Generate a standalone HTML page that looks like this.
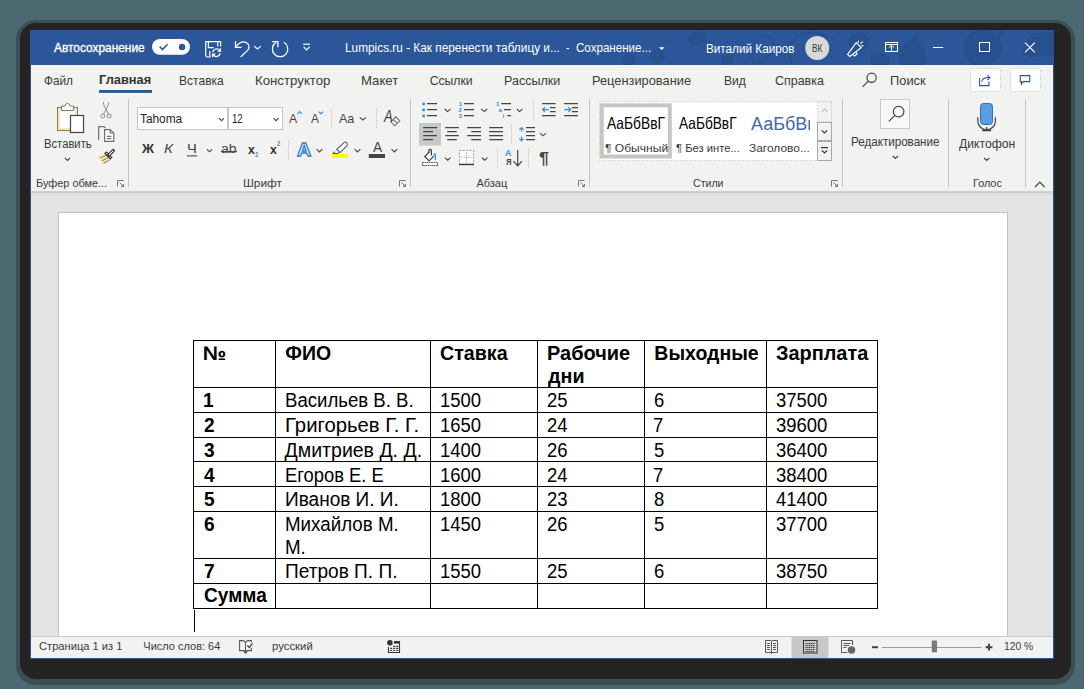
<!DOCTYPE html>
<html><head><meta charset="utf-8">
<style>
*{box-sizing:border-box;margin:0;padding:0}
html,body{width:1084px;height:689px;overflow:hidden;background:#4c6870;font-family:"Liberation Sans",sans-serif;position:relative}
.r{position:absolute}
.t{position:absolute;white-space:pre;line-height:1;transform-origin:0 0}
svg.ov{position:absolute;left:0;top:0}
</style></head><body>
<div class="r" style="left:16px;top:20px;width:1059px;height:665px;border-radius:20px;background:rgba(25,25,25,.32)"></div>
<div class="r" style="left:20px;top:23px;width:1051px;height:656px;border-radius:16px;background:#232323"></div>
<div class="r" style="left:30px;top:30px;width:1024px;height:629px;background:#2b579a"></div>
<div class="r" style="left:31px;top:65px;width:1022px;height:126px;background:#f2f2f1"></div>
<div class="r" style="left:31px;top:191px;width:1022px;height:2px;background:#cfcfcf"></div>
<div class="r" style="left:31px;top:193px;width:1022px;height:2px;background:#dddddd"></div>
<div class="r" style="left:31px;top:195px;width:1022px;height:441px;background:#e4e4e4"></div>
<div class="r" style="left:58px;top:212px;width:950px;height:424px;background:#fff;border:1px solid #c3c3c3;border-bottom:none"></div>
<div class="r" style="left:31px;top:636px;width:1022px;height:22px;background:#f2f2f1;border-top:1px solid #c8c8c8"></div>
<svg class="ov" width="1084" height="689" viewBox="0 0 1084 689" fill="none" stroke-linecap="butt">
<!-- title doodles -->
<defs><clipPath id="tbc"><rect x="30" y="30" width="1024" height="35"/></clipPath></defs>
<g clip-path="url(#tbc)">
<g fill="#27508e">
  <ellipse cx="697.5" cy="38.5" rx="9.5" ry="7" transform="rotate(-10 697.5 38.5)"/>
  <circle cx="658" cy="56.5" r="7"/>
  <circle cx="628.5" cy="60" r="6.5"/>
  <circle cx="727" cy="61" r="6"/>
  <circle cx="859" cy="42.5" r="10"/>
  <ellipse cx="880" cy="61" rx="9.5" ry="8"/>
  <path d="M899,66 C897,52 902,42 912,40 L915,34 L919,35 L917,40 C925,44 927,56 925,66 Z"/>
  <circle cx="982.5" cy="48" r="19"/>
  <path d="M990,38 L1000,31 L1006,31 L998,40 Z"/>
  <path d="M1021,53 L1031,34 L1054,31 V56 L1030,57 Z"/>
</g>
<g fill="none" stroke="#27508e" stroke-width="2">
  <path d="M754,62 C748,52 752,38 764,36 C774,35 776,46 770,54 C766,60 760,64 754,62 Z"/>
  <path d="M792,66 C786,50 792,34 808,33 C822,32 834,36 840,44"/>
</g>
</g>
<!-- title bar -->
<g stroke="#fff" stroke-width="1.2" fill="none">
  <rect x="152" y="38.9" width="38" height="15.9" rx="7.95" fill="#fff" stroke="none"/>
  <path d="M159.6,46.6 L162.4,49.6 L167.6,44.2" stroke="#2b579a" stroke-width="1.5"/>
  <circle cx="182.1" cy="47" r="3.2" fill="#2b579a" stroke="none"/>
  <!-- save -->
  <path d="M210.4,57 H206.9 L205.7,55.8 V41.7 H220.6 V46.6"/>
  <path d="M208.4,41.7 V47.6 H213.6"/>
  <path d="M217.8,41.7 V46.4"/>
  <path d="M209.8,51 V57"/>
  <path d="M212.8,52.2 A3.9,3.9 0 0 1 219.9,50.6"/>
  <path d="M220.5,48.2 V51.2 H217.6"/>
  <path d="M220.2,53.2 A3.9,3.9 0 0 1 213.1,54.8"/>
  <path d="M212.5,57.2 V54.2 H215.4"/>
  <!-- undo -->
  <path d="M235.5,41.2 V47.4 H241.7" stroke-width="1.3"/>
  <path d="M236.2,46.6 C239.2,42.6 243.2,41.2 246.4,42.6 C249.6,44.2 249.6,48 247.6,50.4 L240.6,57" stroke-width="1.25"/>
  <path d="M254.2,46.2 L257.5,49 L260.8,46.2" stroke-width="1.1"/>
  <!-- redo -->
  <path d="M283.9,42.3 A7.7,7.7 0 1 1 275.8,42.6" stroke-width="1.25"/>
  <path d="M272.2,41.7 H277.9 V47.3" stroke-width="1.3"/>
  <!-- customize -->
  <path d="M303.2,44.2 H310" />
  <path d="M303.6,46.9 L306.6,49.9 L309.6,46.9" />
  <!-- megaphone -->
  <path d="M847.6,54.4 L849.8,56.4 L861.2,47.6 L856.2,42.6 Z"/>
  <path d="M852.6,54.4 L854.6,56 L857,54 L856.2,52" stroke-width="1.1"/>
  <path d="M858.4,40.8 V42.8 M860.4,43.6 L862.8,41.6 M861.4,45.6 H863.4" stroke-width="1.1"/>
  <!-- ribbon display -->
  <rect x="885.5" y="42.5" width="12" height="9" stroke-width="1"/>
  <path d="M885,44.5 H898 M891.5,45.4 V51.4 M889.2,47.6 L891.5,45.3 L893.8,47.6" stroke-width="1"/>
  <!-- min max close -->
  <path d="M933,47.5 H943.2" stroke-width="1"/>
  <rect x="979.5" y="42.5" width="10" height="9" stroke-width="1"/>
  <path d="M1025,42.6 L1034.8,52.4 M1034.8,42.6 L1025,52.4" stroke-width="1.1"/>
</g>
<circle cx="817.2" cy="48" r="12" fill="#d9d9d9"/>
<path d="M658.9,47.3 H664.5 L661.7,50.1 Z" fill="#fff"/>
<!-- tabs -->
<rect x="99" y="90" width="53" height="2.9" fill="#2b579a"/>
<g stroke="#444" stroke-width="1.2">
  <circle cx="871.6" cy="77.8" r="4.6"/>
  <path d="M868.2,81.2 L862.6,86.8"/>
</g>
<rect x="970.5" y="68.5" width="30" height="23" rx="2.5" fill="#fff" stroke="#c8c8c8" stroke-dasharray="1.4 1.4"/>
<rect x="1010.5" y="68.5" width="30" height="23" rx="2.5" fill="#fff" stroke="#c8c8c8" stroke-dasharray="1.4 1.4"/>
<g stroke="#2b579a" stroke-width="1.1" fill="none">
  <path d="M979.6,78 V85.6 H989 V81.4"/>
  <path d="M981.6,81.6 C982.6,78.4 985.4,77.2 989.6,77.6 M987.2,75.2 L989.8,77.7 L987.4,80"/>
  <path d="M1020.2,75.6 H1029.8 V81.6 H1023.4 L1021.4,84.2 V81.6 H1020.2 Z"/>
</g>
<!-- group separators -->
<g stroke="#c8c6c4" stroke-width="1">
  <path d="M128.5,99 V187 M410.5,99 V187 M589.5,99 V187 M842.5,99 V187 M948.5,99 V187 M1025.5,99 V187"/>
  <path d="M331.5,108 V129 M376.5,108 V129 M288.5,140 V161 M533.5,100 V120 M511.5,124 V145 M497.5,148 V169 M528.5,148 V169" stroke="#cfcfcf" stroke-dasharray="2 1"/>
</g>
<!-- font boxes -->
<rect x="137.5" y="107.5" width="90" height="22" fill="#fff" stroke="#c6c6c6"/>
<rect x="228.5" y="107.5" width="54" height="22" fill="#fff" stroke="#c6c6c6"/>
<g stroke="#444" stroke-width="1.1">
  <path d="M219,118.2 L221.5,120.7 L224,118.2 M273.6,118.2 L276.1,120.7 L278.6,118.2"/>
</g>
<!-- table -->
<g stroke="#000" stroke-width="1">
  <path d="M193,340.5 H878 M193,387.5 H878 M193,412.5 H878 M193,437.5 H878 M193,461.5 H878 M193,486.5 H878 M193,511.5 H878 M193,558.5 H878 M193,583.5 H878 M193,608.5 H878"/>
  <path d="M193.5,340 V609 M275.5,340 V609 M430.5,340 V609 M537.5,340 V609 M644.5,340 V609 M766.5,340 V609 M877.5,340 V609"/>
  <path d="M194.5,610 V632" stroke-width="1"/>
</g>
<!-- clipboard group -->
<g>
  <rect x="57.5" y="107.5" width="20" height="23" fill="#fde8a6" stroke="#7a7a7a" stroke-width="1"/>
  <rect x="60" y="110" width="15" height="18" fill="#fff" stroke="none"/>
  <path d="M61.5,110.5 V106 H65 A2.5,2.5 0 0 1 70,106 H73.5 V110.5 Z" fill="#fff" stroke="#7a7a7a"/>
  <rect x="70.5" y="115.5" width="13" height="17" fill="#fff" stroke="#444" stroke-width="1.2"/>
</g>
<g stroke="#8a8a8a" stroke-width="1" fill="none">
  <path d="M103.4,102.2 C103.6,105 104.6,107.4 106,109.2 L108.4,114.2 M108.6,102.2 C108.4,105 107.4,107.4 106,109.2 L103.6,114.2"/>
  <circle cx="102.8" cy="116" r="2"/><circle cx="109.2" cy="116" r="2"/>
</g>
<g stroke="#707070" stroke-width="1.2" fill="none">
  <path d="M98.6,139.8 V126.6 H104 L105.6,128.2"/>
  <path d="M104.6,141.4 V129.6 H110.2 L113.8,133.2 V141.4 Z" fill="#fff"/>
  <path d="M110.2,129.8 V133 H113.6 M107,136.4 H111.4 M107,138.6 H111.4"/>
</g>
<g>
  <path d="M105.8,153.2 L98.4,156.6 L104.4,164.8 L110.6,158.4 Z" fill="#fde5a0"/>
  <path d="M99.8,158.2 L105.6,155.6 M101.6,160.8 L108,158 M103.4,163.2 L109.6,160.2" stroke="#707080" stroke-width="0.9" fill="none"/>
  <path d="M105.2,152.4 L111.4,158.6" stroke="#333" stroke-width="3.2"/>
  <path d="M105.8,153 L110.8,158" stroke="#fff" stroke-width="1"/>
  <path d="M108.6,155.2 L113.2,150.6" stroke="#333" stroke-width="3.4" stroke-linecap="round"/>
  <path d="M109.2,154.6 L113,150.8" stroke="#fff" stroke-width="1.1" stroke-linecap="round"/>
</g>
<!-- chevrons -->
<g stroke="#444" stroke-width="1.1" fill="none">
  <path d="M64.8,157.8 L67.5,160.4 L70.2,157.8"/>
  <path d="M207,149.4 L209.5,151.8 L212,149.4"/>
  <path d="M316.6,149.2 L319.5,151.9 L322.4,149.2 M354.6,149.2 L357.5,151.9 L360.4,149.2 M391.5,149.2 L394.4,151.9 L397.3,149.2"/>
  <path d="M359.8,117.4 L362.8,120 L365.8,117.4"/>
  <path d="M444.6,109 L447.5,111.6 L450.4,109 M481.4,109 L484.3,111.6 L487.2,109 M516.8,109 L519.6,111.6 L522.4,109"/>
  <path d="M540,133.2 L543,135.8 L546,133.2"/>
  <path d="M444.8,157.6 L447.7,160.2 L450.6,157.6 M481.7,157.6 L484.6,160.2 L487.5,157.6"/>
  <path d="M892.8,156 L895.4,158.4 L898,156 M984,158 L986.6,160.4 L989.2,158"/>
  <path d="M1035,187 L1039.8,182.2 L1044.6,187" stroke-width="1.2"/>
</g>
<!-- font row1 carets -->
<g stroke="#3b8fd9" stroke-width="1.2" fill="none">
  <path d="M297.4,113.8 L299.6,111.6 L301.8,113.8"/>
  <path d="M318.6,111.6 L320.9,113.8 L323.2,111.6"/>
</g>
<!-- clear formatting eraser -->
<path d="M390.8,121.8 L395.8,116.8 L399.8,120.8 L394.8,125.8 Z M393.3,119.3 L397.3,123.3" stroke="#707070" stroke-width="1.1" fill="none"/>
<!-- underline / strike -->
<path d="M187,155.9 H197.2" stroke="#444" stroke-width="1.1"/>
<path d="M220.8,151.6 H237" stroke="#444" stroke-width="1.1"/>
<!-- highlighter -->
<rect x="331.8" y="154" width="16.3" height="4" fill="#ffff00"/>
<path d="M336.8,149.4 L343.8,142.8 A1.6,1.6 0 0 1 346.8,145.8 L340.2,152.6 Z M335,151.6 L333.2,153.4 L337.8,153.4 L339,152.4" fill="#fff" stroke="#555" stroke-width="1.05"/>
<rect x="368.8" y="154" width="16.2" height="4" fill="#444"/>
<!-- bullets -->
<rect x="419" y="123" width="22" height="22.6" fill="#c8c8c8"/>
<g fill="#3b8fd9">
  <rect x="422.3" y="102.6" width="2.6" height="2.6"/><rect x="422.3" y="108.6" width="2.6" height="2.6"/><rect x="422.3" y="114.6" width="2.6" height="2.6"/>
</g>
<g stroke="#444" stroke-width="1.2">
  <path d="M427,103.6 H437 M427,109.6 H437 M427,115.6 H437 M464,103.6 H474 M464,109.6 H474 M464,115.6 H474 M501.3,103.6 H511 M504,109.6 H511 M507.3,115.6 H511" stroke-width="1.1"/>
  <!-- indent -->
  <path d="M542,103.6 H555.6 M550,107.6 H555.6 M550,111.6 H555.6 M542,115.6 H555.6"/>
  <path d="M564.2,103.6 H578 M572,107.6 H578 M572,111.6 H578 M564.2,115.6 H578"/>
  <!-- align -->
  <path d="M423.2,127.6 H437 M423.2,131.6 H433 M423.2,135.6 H437 M423.2,139.6 H433"/>
  <path d="M445.2,127.6 H458.8 M447.2,131.6 H456.8 M445.2,135.6 H458.8 M447.2,139.6 H456.8"/>
  <path d="M467.2,127.6 H481 M471.2,131.6 H481 M467.2,135.6 H481 M471.2,139.6 H481"/>
  <path d="M489.2,127.6 H503 M489.2,131.6 H503 M489.2,135.6 H503 M489.2,139.6 H503"/>
  <path d="M526,127.6 H535 M526,131.6 H535 M526,135.6 H535 M526,139.6 H535"/>
</g>
<g stroke="#3b8fd9" stroke-width="1.2" fill="none">
  <path d="M549,109.6 H542.6 M545,107.2 L542.6,109.6 L545,112"/>
  <path d="M564.2,109.6 H570.8 M568.4,107.2 L570.8,109.6 L568.4,112"/>
  <path d="M521.5,127.6 V131.8 M521.5,136.4 V140.8 M519.3,129.8 L521.5,127.6 L523.7,129.8 M519.3,138.6 L521.5,140.8 L523.7,138.6"/>
</g>
<g fill="#3b8fd9" font-family="Liberation Sans" font-weight="bold" font-size="6.2">
  <text x="458.8" y="106.4">1</text><text x="458.6" y="112.4">2</text><text x="458.6" y="118.4">3</text>
  <text x="496" y="106.4">1</text><text x="498.6" y="112.4">a</text><text x="502.6" y="118.4">i</text>
</g>
<!-- shading -->
<g fill="none" stroke="#333" stroke-width="1.15">
  <path d="M429.4,151.8 L424.8,156.5 L429.1,160.8 L434.2,155.6" fill="#fff"/>
  <path d="M428.9,152.6 V150.6 A1.25,1.25 0 0 1 431.4,150.6 V155.6"/>
  <rect x="422.5" y="162.5" width="15" height="3" fill="#fff" stroke="#555" stroke-dasharray="1.6 0.6"/>
</g>
<path d="M434,154.6 Q435.4,152.8 435.4,155.4 V160" stroke="#3b8fd9" stroke-width="1.3" fill="none"/>
<!-- borders -->
<rect x="459.5" y="150.5" width="14" height="13.5" fill="#fff" stroke="#9a9a9a" stroke-dasharray="2 1.4"/>
<path d="M466.5,152 V163 M461,157.3 H472" stroke="#b0b0b0" stroke-width="1" stroke-dasharray="1.6 1.4" fill="none"/>
<path d="M459,164.5 H474" stroke="#333" stroke-width="1.3"/>
<!-- sort arrow -->
<path d="M517.7,150 V165.6 M513.4,161.2 L517.7,165.8 L522,161.2" stroke="#444" stroke-width="1.2" fill="none"/>
<!-- styles gallery -->
<rect x="599.5" y="101.5" width="232" height="59" fill="#fff" stroke="#d0d0d0" stroke-dasharray="1.5 1.5"/>
<rect x="601.8" y="105.3" width="68" height="51.2" fill="none" stroke="#c6c6c6" stroke-width="4"/>
<rect x="817.5" y="101.5" width="14" height="20" fill="#f3f2f1" stroke="#d0d0d0" stroke-dasharray="1.5 1.5"/>
<rect x="817.5" y="122.5" width="14" height="18" fill="#f3f2f1" stroke="#a8a8a8"/>
<rect x="817.5" y="141.5" width="14" height="19" fill="#f3f2f1" stroke="#a8a8a8"/>
<g fill="none" stroke-width="1.1">
  <path d="M821.8,111.6 L824.5,109 L827.2,111.6" stroke="#b8b8b8"/>
  <path d="M821.8,130.4 L824.5,133 L827.2,130.4" stroke="#333"/>
  <path d="M821,147.6 H828 M821.8,150.4 L824.5,153 L827.2,150.4" stroke="#333"/>
</g>
<!-- editing -->
<rect x="880.5" y="99.5" width="29" height="29" fill="#f8f8f8" stroke="#c8c8c8"/>
<g stroke="#444" stroke-width="1.2" fill="none">
  <circle cx="898.6" cy="111.6" r="5.3"/>
  <path d="M894.8,115.4 L888.8,121.4"/>
</g>
<!-- mic -->
<rect x="980.5" y="103.5" width="12" height="21" rx="3" fill="#5a9de0" stroke="#2f6db5" stroke-width="1"/>
<path d="M977.8,117.2 V121 A8.8,8.8 0 0 0 995.4,121 V117.2 M986.6,129.8 V130.6 M982,130.6 H991.2" stroke="#444" stroke-width="1.2" fill="none"/>
<path d="M986.6,127 V130.6" stroke="#444" stroke-width="1.2"/>
<!-- launchers -->
<g stroke="#777" stroke-width="1" fill="none">
  <path d="M117.5,186.5 V180.5 H123.5 M119.5,182.5 L123.5,186.5 M121,186.5 H123.5 V184"/>
  <path d="M399.5,186.5 V180.5 H405.5 M401.5,182.5 L405.5,186.5 M403,186.5 H405.5 V184"/>
  <path d="M578.5,186.5 V180.5 H584.5 M580.5,182.5 L584.5,186.5 M582,186.5 H584.5 V184"/>
  <path d="M831.5,186.5 V180.5 H837.5 M833.5,182.5 L837.5,186.5 M835,186.5 H837.5 V184"/>
</g>
<!-- status bar -->
<rect x="791.5" y="637" width="37" height="21" fill="#c8c8c8"/>
<g stroke="#555" stroke-width="1" fill="none">
  <path d="M245.5,642.4 L243.4,640.6 H239.6 V650.6 H244.2 L245.5,651.8 L246.8,650.6 H251.4 V647.8 M251.4,642.6 V640.6 H247.6 L245.5,642.4 M245.5,642.4 V652.8 M243.8,651.4 L245.5,653.2 L247.2,651.4" stroke="#555" stroke-width="1.05"/>
  <path d="M247.4,645.4 L249.2,647.4 L252.6,643.4" stroke="#444" stroke-width="1.3"/>
  <path d="M388.5,647 V652.5 H399.5 V641.2" stroke="#333" stroke-width="1.1"/>
  <rect x="394" y="641" width="6" height="2.6" fill="#333" stroke="none"/>
  <circle cx="389.9" cy="642.8" r="2.8" fill="#333" stroke="none"/>
  <path d="M393.2,646.4 H395.2 M396.2,646.4 H398.2 M390.2,648.4 H392.2 M393.2,648.4 H395.2 M396.2,648.4 H398.2 M390.2,650.5 H392.2 M393.2,650.5 H395.2 M396.2,650.5 H398.2" stroke="#333" stroke-width="1.1"/>
  <path d="M765.5,640.5 H770.8 L771.5,641.5 L772.2,640.5 H777.5 V652.5 H765.5 Z M771.5,641.5 V654 M767,643.5 H770 M767,645.5 H770 M767,647.5 H770 M767,649.5 H770 M773,643.5 H776 M773,645.5 H776 M773,647.5 H776 M773,649.5 H776"/>
  <rect x="803.5" y="640.5" width="13.5" height="12.5" stroke="#333"/>
  <path d="M805.5,643.5 H815 M805.5,645.5 H815 M805.5,647.5 H815 M805.5,649.5 H815 M805.5,651.5 H815" stroke="#333" stroke-dasharray="1.2 0.6"/>
  <path d="M847.5,652.5 H841.5 V640.5 H852.5 V645 M843.5,643.5 H850.5 M843.5,645.5 H849 M843.5,647.5 H846.5"/>
  <circle cx="851.5" cy="650" r="3.8" fill="#666" stroke="none"/>
  <path d="M872,647.2 H878" stroke="#444" stroke-width="2"/>
  <path d="M882,647.5 H981.5" stroke="#999"/>
  <path d="M985.6,647.2 H992.4 M989,643.8 V650.6" stroke="#444" stroke-width="2"/>
</g>
<rect x="931.8" y="640.5" width="5.2" height="11.8" fill="#7a7a7a"/>

</svg>

<span class="t" style="left:54.20px;top:41.89px;font-size:12.3px;font-weight:normal;color:#fff;transform:scaleX(0.9670);-webkit-text-stroke:0.35px #fff;">Автосохранение</span>
<span class="t" style="left:344.50px;top:42.34px;font-size:12px;font-weight:normal;color:#fff;transform:scaleX(0.9857);">Lumpics.ru - Как перенести таблицу и...</span>
<span class="t" style="left:565.60px;top:42.34px;font-size:12px;font-weight:normal;color:#fff;transform:scaleX(0.8500);">-</span>
<span class="t" style="left:576.40px;top:42.34px;font-size:12px;font-weight:normal;color:#fff;transform:scaleX(0.9648);">Сохранение...</span>
<span class="t" style="left:705.80px;top:43.14px;font-size:12px;font-weight:normal;color:#fff;transform:scaleX(0.9767);">Виталий Каиров</span>
<span class="t" style="left:811.80px;top:43.09px;font-size:11px;font-weight:normal;color:#3a3a3a;transform:scaleX(0.7533);">ВК</span>
<span class="t" style="left:43.50px;top:75.07px;font-size:12.2px;font-weight:normal;color:#3b3a39;transform:scaleX(0.9681);">Файл</span>
<span class="t" style="left:99.40px;top:74.48px;font-size:12.9px;font-weight:bold;color:#333;transform:scaleX(0.9942);">Главная</span>
<span class="t" style="left:179.31px;top:75.07px;font-size:12.2px;font-weight:normal;color:#3b3a39;transform:scaleX(0.9883);">Вставка</span>
<span class="t" style="left:255.31px;top:75.07px;font-size:12.2px;font-weight:normal;color:#3b3a39;transform:scaleX(1.0857);">Конструктор</span>
<span class="t" style="left:361.32px;top:75.07px;font-size:12.2px;font-weight:normal;color:#3b3a39;transform:scaleX(1.0793);">Макет</span>
<span class="t" style="left:429.70px;top:75.07px;font-size:12.2px;font-weight:normal;color:#3b3a39;">Ссылки</span>
<span class="t" style="left:503.97px;top:75.07px;font-size:12.2px;font-weight:normal;color:#3b3a39;transform:scaleX(1.0266);">Рассылки</span>
<span class="t" style="left:591.75px;top:75.07px;font-size:12.2px;font-weight:normal;color:#3b3a39;transform:scaleX(1.0522);">Рецензирование</span>
<span class="t" style="left:723.51px;top:75.07px;font-size:12.2px;font-weight:normal;color:#3b3a39;transform:scaleX(0.9935);">Вид</span>
<span class="t" style="left:775.40px;top:75.07px;font-size:12.2px;font-weight:normal;color:#3b3a39;transform:scaleX(1.0222);">Справка</span>
<span class="t" style="left:890.00px;top:75.07px;font-size:12.2px;font-weight:normal;color:#3b3a39;transform:scaleX(1.0540);">Поиск</span>
<span class="t" style="left:44.40px;top:137.84px;font-size:12px;font-weight:normal;color:#3b3a39;transform:scaleX(0.9365);">Вставить</span>
<span class="t" style="left:35.50px;top:178.09px;font-size:11px;font-weight:normal;color:#3b3a39;transform:scaleX(0.9921);">Буфер обме...</span>
<span class="t" style="left:242.50px;top:178.09px;font-size:11px;font-weight:normal;color:#3b3a39;transform:scaleX(1.0732);">Шрифт</span>
<span class="t" style="left:476.40px;top:178.09px;font-size:11px;font-weight:normal;color:#3b3a39;">Абзац</span>
<span class="t" style="left:692.70px;top:178.09px;font-size:11px;font-weight:normal;color:#3b3a39;transform:scaleX(0.9637);">Стили</span>
<span class="t" style="left:972.60px;top:178.09px;font-size:11px;font-weight:normal;color:#3b3a39;transform:scaleX(0.9847);">Голос</span>
<span class="t" style="left:851.20px;top:136.14px;font-size:12px;font-weight:normal;color:#3b3a39;transform:scaleX(0.9680);">Редактирование</span>
<span class="t" style="left:959.00px;top:137.84px;font-size:12px;font-weight:normal;color:#3b3a39;transform:scaleX(1.0147);">Диктофон</span>
<span class="t" style="left:140.30px;top:112.54px;font-size:12px;font-weight:normal;color:#262626;transform:scaleX(0.9880);">Tahoma</span>
<span class="t" style="left:232.00px;top:112.54px;font-size:12px;font-weight:normal;color:#262626;transform:scaleX(0.8045);">12</span>
<span class="t" style="left:606.80px;top:114.93px;font-size:16.5px;font-weight:normal;color:#000;transform:scaleX(0.8355);">АаБбВвГ</span>
<span class="t" style="left:604.90px;top:143.17px;font-size:11.5px;font-weight:normal;color:#3b3a39;transform:scaleX(1.0489);">¶ Обычный</span>
<span class="t" style="left:678.70px;top:114.93px;font-size:16.5px;font-weight:normal;color:#000;transform:scaleX(0.8298);">АаБбВвГ</span>
<span class="t" style="left:676.40px;top:143.17px;font-size:11.5px;font-weight:normal;color:#3b3a39;transform:scaleX(0.9750);">¶ Без инте...</span>
<span class="t" style="left:748.80px;top:143.17px;font-size:11.5px;font-weight:normal;color:#3b3a39;transform:scaleX(1.0389);">Заголово...</span>
<span class="t" style="left:289.20px;top:111.80px;font-size:13px;font-weight:normal;color:#444;transform:scaleX(0.9444);">A</span>
<span class="t" style="left:311.30px;top:111.80px;font-size:13px;font-weight:normal;color:#444;transform:scaleX(0.9111);">A</span>
<span class="t" style="left:339.20px;top:111.80px;font-size:13px;font-weight:normal;color:#444;transform:scaleX(0.9598);">Aa</span>
<span class="t" style="left:384.00px;top:108.41px;font-size:17px;font-weight:normal;color:#444;transform:scaleX(0.7750);font-style:italic;">A</span>
<span class="t" style="left:142.06px;top:143.02px;font-size:12.5px;font-weight:bold;color:#333;transform:scaleX(1.0615);">Ж</span>
<span class="t" style="left:163.89px;top:143.02px;font-size:12.5px;font-weight:normal;color:#444;transform:scaleX(1.2143);font-style:italic;">К</span>
<span class="t" style="left:187.40px;top:143.02px;font-size:12.5px;font-weight:normal;color:#444;transform:scaleX(1.1750);">Ч</span>
<span class="t" style="left:221.20px;top:143.02px;font-size:12.5px;font-weight:normal;color:#444;transform:scaleX(1.1253);">ab</span>
<span class="t" style="left:247.50px;top:142.60px;font-size:13px;font-weight:bold;color:#333;transform:scaleX(0.9375);">x</span>
<span class="t" style="left:255.20px;top:151.27px;font-size:7px;font-weight:bold;color:#3b8fd9;transform:scaleX(0.8000);">2</span>
<span class="t" style="left:269.50px;top:142.60px;font-size:13px;font-weight:bold;color:#333;transform:scaleX(0.9375);">x</span>
<span class="t" style="left:277.00px;top:140.27px;font-size:7px;font-weight:bold;color:#3b8fd9;transform:scaleX(0.8000);">2</span>
<span class="t" style="left:296.80px;top:140.32px;font-size:19px;font-weight:bold;color:#fff;transform:scaleX(1.0286);-webkit-text-stroke:1.3px #2f80d8;">A</span>
<span class="t" style="left:372.50px;top:140.33px;font-size:14.5px;font-weight:normal;color:#444;transform:scaleX(0.9400);">A</span>
<span class="t" style="left:505.30px;top:148.73px;font-size:9.3px;font-weight:bold;color:#3b8fd9;transform:scaleX(0.9571);">А</span>
<span class="t" style="left:505.60px;top:157.93px;font-size:9.3px;font-weight:bold;color:#444;transform:scaleX(0.8286);">Я</span>
<span class="t" style="left:539.20px;top:150.33px;font-size:16.5px;font-weight:bold;color:#444;transform:scaleX(1.0889);">¶</span>
<span class="t" style="left:751.00px;top:114.66px;font-size:18px;font-weight:normal;color:#3e67ad;width:58.50px;overflow:hidden;">АаБбВв</span>
<span class="t" style="left:38.50px;top:641.39px;font-size:11px;font-weight:normal;color:#3b3a39;transform:scaleX(1.0118);">Страница 1 из 1</span>
<span class="t" style="left:143.30px;top:641.39px;font-size:11px;font-weight:normal;color:#3b3a39;">Число слов: 64</span>
<span class="t" style="left:271.70px;top:641.39px;font-size:11px;font-weight:normal;color:#3b3a39;transform:scaleX(1.0324);">русский</span>
<span class="t" style="left:1004.20px;top:641.39px;font-size:11px;font-weight:normal;color:#3b3a39;transform:scaleX(0.9392);">120 %</span>
<span class="t" style="left:202.50px;top:344.39px;font-size:19.5px;font-weight:bold;color:#000;transform:scaleX(1.0950);">№</span>
<span class="t" style="left:285.30px;top:344.39px;font-size:19.5px;font-weight:bold;color:#000;">ФИО</span>
<span class="t" style="left:440.20px;top:344.39px;font-size:19.5px;font-weight:bold;color:#000;transform:scaleX(1.0086);">Ставка</span>
<span class="t" style="left:546.78px;top:344.39px;font-size:19.5px;font-weight:bold;color:#000;transform:scaleX(1.0240);">Рабочие</span>
<span class="t" style="left:547.80px;top:366.59px;font-size:19.5px;font-weight:bold;color:#000;transform:scaleX(1.0098);">дни</span>
<span class="t" style="left:654.30px;top:344.39px;font-size:19.5px;font-weight:bold;color:#000;">Выходные</span>
<span class="t" style="left:776.00px;top:344.39px;font-size:19.5px;font-weight:bold;color:#000;transform:scaleX(1.0206);">Зарплата</span>
<span class="t" style="left:203.02px;top:391.39px;font-size:19.5px;font-weight:bold;color:#000;transform:scaleX(0.9800);">1</span>
<span class="t" style="left:284.95px;top:391.39px;font-size:19.5px;font-weight:normal;color:#000;transform:scaleX(0.9532);">Васильев В. В.</span>
<span class="t" style="left:439.55px;top:391.39px;font-size:19.5px;font-weight:normal;color:#000;transform:scaleX(0.9470);">1500</span>
<span class="t" style="left:547.00px;top:391.39px;font-size:19.5px;font-weight:normal;color:#000;transform:scaleX(0.9470);">25</span>
<span class="t" style="left:654.30px;top:391.39px;font-size:19.5px;font-weight:normal;color:#000;transform:scaleX(0.9470);">6</span>
<span class="t" style="left:776.00px;top:391.39px;font-size:19.5px;font-weight:normal;color:#000;transform:scaleX(0.9470);">37500</span>
<span class="t" style="left:204.00px;top:416.39px;font-size:19.5px;font-weight:bold;color:#000;transform:scaleX(0.9800);">2</span>
<span class="t" style="left:284.86px;top:416.39px;font-size:19.5px;font-weight:normal;color:#000;transform:scaleX(1.0407);">Григорьев Г. Г.</span>
<span class="t" style="left:439.55px;top:416.39px;font-size:19.5px;font-weight:normal;color:#000;transform:scaleX(0.9470);">1650</span>
<span class="t" style="left:547.00px;top:416.39px;font-size:19.5px;font-weight:normal;color:#000;transform:scaleX(0.9470);">24</span>
<span class="t" style="left:653.35px;top:416.39px;font-size:19.5px;font-weight:normal;color:#000;transform:scaleX(0.9470);">7</span>
<span class="t" style="left:776.00px;top:416.39px;font-size:19.5px;font-weight:normal;color:#000;transform:scaleX(0.9470);">39600</span>
<span class="t" style="left:204.00px;top:441.19px;font-size:19.5px;font-weight:bold;color:#000;transform:scaleX(0.9800);">3</span>
<span class="t" style="left:284.60px;top:441.19px;font-size:19.5px;font-weight:normal;color:#000;">Дмитриев Д. Д.</span>
<span class="t" style="left:439.55px;top:441.19px;font-size:19.5px;font-weight:normal;color:#000;transform:scaleX(0.9470);">1400</span>
<span class="t" style="left:547.00px;top:441.19px;font-size:19.5px;font-weight:normal;color:#000;transform:scaleX(0.9470);">26</span>
<span class="t" style="left:654.30px;top:441.19px;font-size:19.5px;font-weight:normal;color:#000;transform:scaleX(0.9470);">5</span>
<span class="t" style="left:776.00px;top:441.19px;font-size:19.5px;font-weight:normal;color:#000;transform:scaleX(0.9470);">36400</span>
<span class="t" style="left:204.00px;top:465.69px;font-size:19.5px;font-weight:bold;color:#000;transform:scaleX(0.9800);">4</span>
<span class="t" style="left:284.96px;top:465.69px;font-size:19.5px;font-weight:normal;color:#000;transform:scaleX(0.9418);">Егоров Е. Е</span>
<span class="t" style="left:439.55px;top:465.69px;font-size:19.5px;font-weight:normal;color:#000;transform:scaleX(0.9470);">1600</span>
<span class="t" style="left:547.00px;top:465.69px;font-size:19.5px;font-weight:normal;color:#000;transform:scaleX(0.9470);">24</span>
<span class="t" style="left:653.35px;top:465.69px;font-size:19.5px;font-weight:normal;color:#000;transform:scaleX(0.9470);">7</span>
<span class="t" style="left:776.00px;top:465.69px;font-size:19.5px;font-weight:normal;color:#000;transform:scaleX(0.9470);">38400</span>
<span class="t" style="left:204.00px;top:489.89px;font-size:19.5px;font-weight:bold;color:#000;transform:scaleX(0.9800);">5</span>
<span class="t" style="left:284.93px;top:489.89px;font-size:19.5px;font-weight:normal;color:#000;transform:scaleX(0.9750);">Иванов И. И.</span>
<span class="t" style="left:439.55px;top:489.89px;font-size:19.5px;font-weight:normal;color:#000;transform:scaleX(0.9470);">1800</span>
<span class="t" style="left:547.00px;top:489.89px;font-size:19.5px;font-weight:normal;color:#000;transform:scaleX(0.9470);">23</span>
<span class="t" style="left:654.30px;top:489.89px;font-size:19.5px;font-weight:normal;color:#000;transform:scaleX(0.9470);">8</span>
<span class="t" style="left:776.00px;top:489.89px;font-size:19.5px;font-weight:normal;color:#000;transform:scaleX(0.9470);">41400</span>
<span class="t" style="left:204.00px;top:514.59px;font-size:19.5px;font-weight:bold;color:#000;transform:scaleX(0.9800);">6</span>
<span class="t" style="left:284.94px;top:514.59px;font-size:19.5px;font-weight:normal;color:#000;transform:scaleX(0.9614);">Михайлов М.</span>
<span class="t" style="left:439.55px;top:514.59px;font-size:19.5px;font-weight:normal;color:#000;transform:scaleX(0.9470);">1450</span>
<span class="t" style="left:547.00px;top:514.59px;font-size:19.5px;font-weight:normal;color:#000;transform:scaleX(0.9470);">26</span>
<span class="t" style="left:654.30px;top:514.59px;font-size:19.5px;font-weight:normal;color:#000;transform:scaleX(0.9470);">5</span>
<span class="t" style="left:776.00px;top:514.59px;font-size:19.5px;font-weight:normal;color:#000;transform:scaleX(0.9470);">37700</span>
<span class="t" style="left:204.00px;top:561.69px;font-size:19.5px;font-weight:bold;color:#000;transform:scaleX(0.9800);">7</span>
<span class="t" style="left:284.92px;top:561.69px;font-size:19.5px;font-weight:normal;color:#000;transform:scaleX(0.9789);">Петров П. П.</span>
<span class="t" style="left:439.55px;top:561.69px;font-size:19.5px;font-weight:normal;color:#000;transform:scaleX(0.9470);">1550</span>
<span class="t" style="left:547.00px;top:561.69px;font-size:19.5px;font-weight:normal;color:#000;transform:scaleX(0.9470);">25</span>
<span class="t" style="left:654.30px;top:561.69px;font-size:19.5px;font-weight:normal;color:#000;transform:scaleX(0.9470);">6</span>
<span class="t" style="left:776.00px;top:561.69px;font-size:19.5px;font-weight:normal;color:#000;transform:scaleX(0.9470);">38750</span>
<span class="t" style="left:284.84px;top:538.39px;font-size:19.5px;font-weight:normal;color:#000;transform:scaleX(0.9614);">М.</span>
<span class="t" style="left:203.60px;top:586.39px;font-size:19.5px;font-weight:bold;color:#000;transform:scaleX(0.9788);">Сумма</span>
</body></html>
